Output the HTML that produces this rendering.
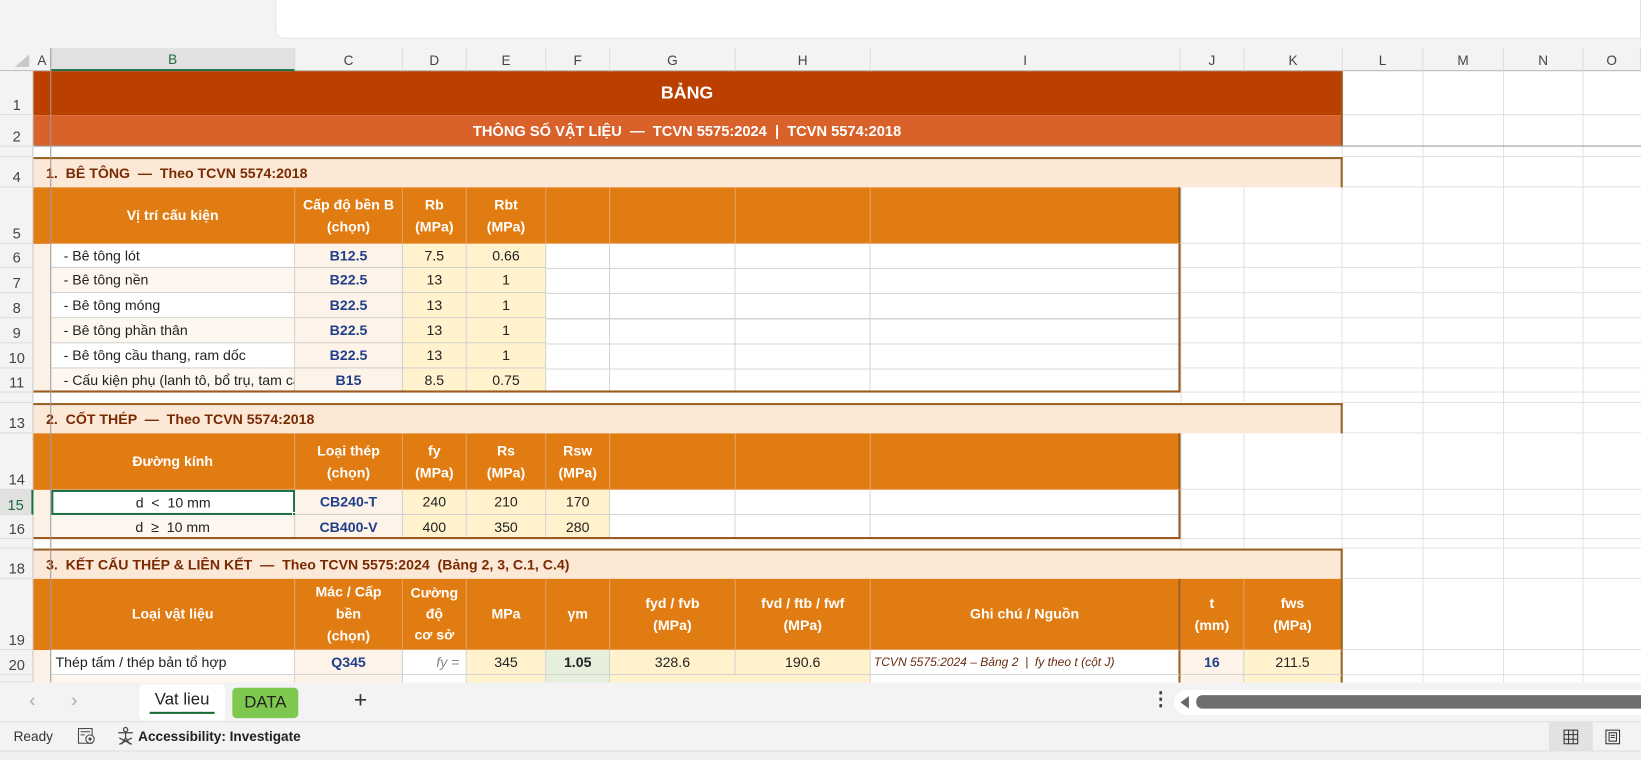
<!DOCTYPE html>
<html><head><meta charset="utf-8"><style>
html,body{margin:0;padding:0;width:1641px;height:760px;overflow:hidden;background:#f0f0f0}
#w{position:absolute;left:0;top:0;width:1568px;height:726px;transform:scale(1.04656,1.0468);transform-origin:0 0;background:#f3f3f3;font-family:"Liberation Sans",sans-serif}
.a{position:absolute;box-sizing:border-box}
.c{position:absolute;box-sizing:border-box;overflow:hidden;white-space:nowrap;display:flex;align-items:center;justify-content:center;font-size:13.5px;color:#222;border-right:1px solid #cfcfcf;border-bottom:1px solid #cfcfcf}
.h{background:#e07c12;color:#fff;font-weight:bold;text-align:center;flex-direction:column;line-height:21px;border-color:#e9a060}
.l{justify-content:flex-start;padding-left:8px}
.b{color:#1f3f8a;font-weight:bold}
.y{background:#fff2cc}
.cr{background:#fdf3e8}
.g{background:#e6efdc}
.sec{background:#fce8d6;color:#7a2a00;font-weight:bold;justify-content:flex-start;padding-left:12px;font-size:13.5px;border:none;border-top:2px solid #9a6428;border-right:2px solid #9a6428}
.rh{position:absolute;left:0;width:32px;box-sizing:border-box;font-size:14px;color:#444;text-align:center;display:flex;align-items:flex-end;justify-content:center;padding-bottom:1px;border-bottom:1px solid #dcdcdc}
.ch{position:absolute;top:46px;height:22px;font-size:13px;color:#444;display:flex;align-items:center;justify-content:center;border-right:1px solid #dcdcdc;box-sizing:border-box}
</style></head><body><div id="w">
<div class="a" style="left:263px;top:0;width:1305px;height:37px;background:#fff;border-bottom-left-radius:8px;border:1px solid #e2e2e2;border-top:none"></div>
<!-- sheet bg -->
<div class="a" style="left:32px;top:68px;width:1536px;height:584px;background:#fff;
background-image:linear-gradient(90deg,transparent 1250px,#e1e1e1 1250px,#e1e1e1 1251px,transparent 1251px,transparent 1327px,#e1e1e1 1327px,#e1e1e1 1328px,transparent 1328px,transparent 1404px,#e1e1e1 1404px,#e1e1e1 1405px,transparent 1405px,transparent 1480px,#e1e1e1 1480px,#e1e1e1 1481px,transparent 1481px)"></div>
<!-- column headers -->
<div class="a" style="left:0;top:46px;width:1568px;height:22px;background:#f3f3f3;border-bottom:1px solid #b8b8b8"></div>
<div class="a" style="left:14px;top:52px;width:0;height:0;border-left:14px solid transparent;border-bottom:12px solid #c8c8c8"></div>
<div class="ch" style="left:32px;width:17px">A</div>
<div class="ch" style="left:49px;width:233px;background:#e1e1e1;color:#1e6b3a;border-bottom:2px solid #1e7145">B</div>
<div class="ch" style="left:282px;width:103px">C</div>
<div class="ch" style="left:385px;width:61px">D</div>
<div class="ch" style="left:446px;width:76px">E</div>
<div class="ch" style="left:522px;width:61px">F</div>
<div class="ch" style="left:583px;width:120px">G</div>
<div class="ch" style="left:703px;width:129px">H</div>
<div class="ch" style="left:832px;width:296px">I</div>
<div class="ch" style="left:1128px;width:61px">J</div>
<div class="ch" style="left:1189px;width:94px">K</div>
<div class="ch" style="left:1283px;width:77px">L</div>
<div class="ch" style="left:1360px;width:77px">M</div>
<div class="ch" style="left:1437px;width:76px">N</div>
<div class="ch" style="left:1513px;width:55px">O</div>
<!-- row headers -->
<div class="a" style="left:0;top:68px;width:32px;height:584px;background:#f3f3f3;border-right:1px solid #c8c8c8"></div>
<div class="rh" style="top:68px;height:42px">1</div><div class="rh" style="top:110px;height:30px">2</div>
<div class="rh" style="top:140px;height:10px"></div><div class="rh" style="top:150px;height:29px">4</div>
<div class="rh" style="top:179px;height:54px">5</div><div class="rh" style="top:233px;height:23px">6</div>
<div class="rh" style="top:256px;height:24px">7</div><div class="rh" style="top:280px;height:24px">8</div>
<div class="rh" style="top:304px;height:24px">9</div><div class="rh" style="top:328px;height:24px">10</div>
<div class="rh" style="top:352px;height:23px">11</div><div class="rh" style="top:375px;height:10px"></div>
<div class="rh" style="top:385px;height:29px">13</div><div class="rh" style="top:414px;height:54px">14</div>
<div class="rh" style="top:468px;height:24px;background:#e1e1e1;color:#1e6b3a;border-right:2px solid #1e7145">15</div><div class="rh" style="top:492px;height:23px">16</div>
<div class="rh" style="top:515px;height:9px"></div><div class="rh" style="top:524px;height:29px">18</div>
<div class="rh" style="top:553px;height:68px">19</div><div class="rh" style="top:621px;height:24px">20</div>
<div class="rh" style="top:645px;height:7px"></div>
<!-- row gridlines for empty area -->
<div class="a" style="left:1283px;top:68px;width:285px;height:584px;background:repeating-linear-gradient(transparent 0 0);">
</div>
<div class="a" style="left:1283px;top:109px;width:285px;height:1px;background:#e1e1e1"></div>
<div class="a" style="left:1283px;top:149px;width:285px;height:1px;background:#e1e1e1"></div>
<div class="a" style="left:1283px;top:178px;width:285px;height:1px;background:#e1e1e1"></div>
<div class="a" style="left:1128px;top:232px;width:440px;height:1px;background:#e1e1e1"></div>
<div class="a" style="left:1128px;top:255px;width:440px;height:1px;background:#e1e1e1"></div>
<div class="a" style="left:1128px;top:279px;width:440px;height:1px;background:#e1e1e1"></div>
<div class="a" style="left:1128px;top:303px;width:440px;height:1px;background:#e1e1e1"></div>
<div class="a" style="left:1128px;top:327px;width:440px;height:1px;background:#e1e1e1"></div>
<div class="a" style="left:1128px;top:351px;width:440px;height:1px;background:#e1e1e1"></div>
<div class="a" style="left:1128px;top:374px;width:440px;height:1px;background:#e1e1e1"></div>
<div class="a" style="left:1283px;top:384px;width:285px;height:1px;background:#e1e1e1"></div>
<div class="a" style="left:1283px;top:413px;width:285px;height:1px;background:#e1e1e1"></div>
<div class="a" style="left:1128px;top:467px;width:440px;height:1px;background:#e1e1e1"></div>
<div class="a" style="left:1128px;top:491px;width:440px;height:1px;background:#e1e1e1"></div>
<div class="a" style="left:32px;top:514px;width:1536px;height:1px;background:#e1e1e1"></div>
<div class="a" style="left:1283px;top:523px;width:285px;height:1px;background:#e1e1e1"></div>
<div class="a" style="left:1283px;top:552px;width:285px;height:1px;background:#e1e1e1"></div>
<div class="a" style="left:1283px;top:620px;width:285px;height:1px;background:#e1e1e1"></div>
<div class="a" style="left:1283px;top:644px;width:285px;height:1px;background:#e1e1e1"></div>
<div class="a" style="left:1188px;top:179px;width:1px;height:205px;background:#e1e1e1"></div>
<div class="a" style="left:1188px;top:414px;width:1px;height:110px;background:#e1e1e1"></div>
<div class="a" style="left:1128px;top:179px;width:1px;height:205px;background:#e1e1e1"></div>
<div class="a" style="left:1128px;top:414px;width:1px;height:110px;background:#e1e1e1"></div>
<!-- title -->
<div class="c" style="left:32px;top:68px;width:1251px;height:42px;background:#bb4000;color:#fff;font-weight:bold;font-size:17px;border:none;border-right:2px solid #9a5a20">BẢNG</div>
<div class="c" style="left:32px;top:110px;width:1251px;height:30px;background:#d9622b;color:#fff;font-weight:bold;font-size:14px;border:none;border-right:2px solid #9a5a20">THÔNG SỐ VẬT LIỆU &nbsp;— &nbsp;TCVN 5575:2024 &nbsp;| &nbsp;TCVN 5574:2018</div>
<!-- section 1 -->
<div class="c sec" style="left:32px;top:150px;width:1251px;height:29px">1.&nbsp; BÊ TÔNG &nbsp;— &nbsp;Theo TCVN 5574:2018</div>
<div class="c h" style="left:32px;top:179px;width:17px;height:54px;border:none"></div>
<div class="c h" style="left:49px;top:179px;width:233px;height:54px">Vị trí cấu kiện</div>
<div class="c h" style="left:282px;top:179px;width:103px;height:54px"><span>Cấp độ bền B</span><span>(chọn)</span></div>
<div class="c h" style="left:385px;top:179px;width:61px;height:54px"><span>Rb</span><span>(MPa)</span></div>
<div class="c h" style="left:446px;top:179px;width:76px;height:54px"><span>Rbt</span><span>(MPa)</span></div>
<div class="c h" style="left:522px;top:179px;width:61px;height:54px"></div>
<div class="c h" style="left:583px;top:179px;width:120px;height:54px"></div>
<div class="c h" style="left:703px;top:179px;width:129px;height:54px"></div>
<div class="c h" style="left:832px;top:179px;width:296px;height:54px;border-right:2px solid #9a5a20"></div>

<div class="c" style="left:32px;top:233px;width:17px;height:142px;background:#fdf1e6;border:none"></div>
<div class="c l" style="left:49px;top:233px;width:233px;height:23px;background:#fff">&nbsp;- Bê tông lót</div>
<div class="c b cr" style="left:282px;top:233px;width:103px;height:23px">B12.5</div>
<div class="c y" style="left:385px;top:233px;width:61px;height:23px">7.5</div>
<div class="c y" style="left:446px;top:233px;width:76px;height:23px">0.66</div>
<div class="c l" style="left:49px;top:256px;width:233px;height:24px;background:#fdf7f0">&nbsp;- Bê tông nền</div>
<div class="c b cr" style="left:282px;top:256px;width:103px;height:24px">B22.5</div>
<div class="c y" style="left:385px;top:256px;width:61px;height:24px">13</div>
<div class="c y" style="left:446px;top:256px;width:76px;height:24px">1</div>
<div class="c l" style="left:49px;top:280px;width:233px;height:24px;background:#fff">&nbsp;- Bê tông móng</div>
<div class="c b cr" style="left:282px;top:280px;width:103px;height:24px">B22.5</div>
<div class="c y" style="left:385px;top:280px;width:61px;height:24px">13</div>
<div class="c y" style="left:446px;top:280px;width:76px;height:24px">1</div>
<div class="c l" style="left:49px;top:304px;width:233px;height:24px;background:#fdf7f0">&nbsp;- Bê tông phần thân</div>
<div class="c b cr" style="left:282px;top:304px;width:103px;height:24px">B22.5</div>
<div class="c y" style="left:385px;top:304px;width:61px;height:24px">13</div>
<div class="c y" style="left:446px;top:304px;width:76px;height:24px">1</div>
<div class="c l" style="left:49px;top:328px;width:233px;height:24px;background:#fff">&nbsp;- Bê tông cầu thang, ram dốc</div>
<div class="c b cr" style="left:282px;top:328px;width:103px;height:24px">B22.5</div>
<div class="c y" style="left:385px;top:328px;width:61px;height:24px">13</div>
<div class="c y" style="left:446px;top:328px;width:76px;height:24px">1</div>
<div class="c l" style="left:49px;top:352px;width:233px;height:23px;background:#fdf7f0">&nbsp;- Cấu kiện phụ (lanh tô, bổ trụ, tam cấp)</div>
<div class="c b cr" style="left:282px;top:352px;width:103px;height:23px">B15</div>
<div class="c y" style="left:385px;top:352px;width:61px;height:23px">8.5</div>
<div class="c y" style="left:446px;top:352px;width:76px;height:23px">0.75</div>
<div class="a" style="left:522px;top:233px;width:606px;height:142px;background:#fff;background-image:linear-gradient(90deg,transparent 60px,#d4d4d4 60px,#d4d4d4 61px,transparent 61px,transparent 180px,#d4d4d4 180px,#d4d4d4 181px,transparent 181px,transparent 309px,#d4d4d4 309px,#d4d4d4 310px,transparent 310px),repeating-linear-gradient(transparent 0 23px,#d4d4d4 23px 24px);border-right:2px solid #9a5a20"></div>
<div class="a" style="left:32px;top:373px;width:1096px;height:2px;background:#9a5a20"></div>
<!-- section 2 -->
<div class="c sec" style="left:32px;top:385px;width:1251px;height:29px">2.&nbsp; CỐT THÉP &nbsp;— &nbsp;Theo TCVN 5574:2018</div>
<div class="c h" style="left:32px;top:414px;width:17px;height:54px;border:none"></div>
<div class="c h" style="left:49px;top:414px;width:233px;height:54px">Đường kính</div>
<div class="c h" style="left:282px;top:414px;width:103px;height:54px"><span>Loại thép</span><span>(chọn)</span></div>
<div class="c h" style="left:385px;top:414px;width:61px;height:54px"><span>fy</span><span>(MPa)</span></div>
<div class="c h" style="left:446px;top:414px;width:76px;height:54px"><span>Rs</span><span>(MPa)</span></div>
<div class="c h" style="left:522px;top:414px;width:61px;height:54px"><span>Rsw</span><span>(MPa)</span></div>
<div class="c h" style="left:583px;top:414px;width:120px;height:54px"></div>
<div class="c h" style="left:703px;top:414px;width:129px;height:54px"></div>
<div class="c h" style="left:832px;top:414px;width:296px;height:54px;border-right:2px solid #9a5a20"></div>
<div class="c" style="left:32px;top:468px;width:17px;height:47px;background:#fdf1e6;border:none"></div>
<div class="c" style="left:49px;top:468px;width:233px;height:24px;background:#fff;border:2px solid #1e7145">d &nbsp;&lt; &nbsp;10 mm</div>
<div class="a" style="left:279px;top:489px;width:5px;height:5px;background:#1e7145;border:1px solid #fff"></div>
<div class="c b cr" style="left:282px;top:468px;width:103px;height:24px">CB240-T</div>
<div class="c y" style="left:385px;top:468px;width:61px;height:24px">240</div>
<div class="c y" style="left:446px;top:468px;width:76px;height:24px">210</div>
<div class="c y" style="left:522px;top:468px;width:61px;height:24px">170</div>
<div class="c" style="left:49px;top:492px;width:233px;height:23px;background:#fdf7f0">d &nbsp;≥ &nbsp;10 mm</div>
<div class="c b cr" style="left:282px;top:492px;width:103px;height:23px">CB400-V</div>
<div class="c y" style="left:385px;top:492px;width:61px;height:23px">400</div>
<div class="c y" style="left:446px;top:492px;width:76px;height:23px">350</div>
<div class="c y" style="left:522px;top:492px;width:61px;height:23px">280</div>
<div class="a" style="left:583px;top:468px;width:545px;height:47px;background:#fff;background-image:linear-gradient(90deg,transparent 119px,#d4d4d4 119px,#d4d4d4 120px,transparent 120px,transparent 248px,#d4d4d4 248px,#d4d4d4 249px,transparent 249px),linear-gradient(transparent 23px,#d4d4d4 23px,#d4d4d4 24px,transparent 24px);border-right:2px solid #9a5a20"></div>
<div class="a" style="left:32px;top:513px;width:1096px;height:2px;background:#9a5a20"></div>
<!-- section 3 -->
<div class="c sec" style="left:32px;top:524px;width:1251px;height:29px">3.&nbsp; KẾT CẤU THÉP &amp; LIÊN KẾT &nbsp;— &nbsp;Theo TCVN 5575:2024 &nbsp;(Bảng 2, 3, C.1, C.4)</div>
<div class="c h" style="left:32px;top:553px;width:17px;height:68px;border:none"></div>
<div class="c h" style="left:49px;top:553px;width:233px;height:68px">Loại vật liệu</div>
<div class="c h" style="left:282px;top:553px;width:103px;height:68px"><span>Mác / Cấp</span><span>bền</span><span>(chọn)</span></div>
<div class="c h" style="left:385px;top:553px;width:61px;height:68px;line-height:20px"><span>Cường</span><span>độ</span><span>cơ sở</span></div>
<div class="c h" style="left:446px;top:553px;width:76px;height:68px">MPa</div>
<div class="c h" style="left:522px;top:553px;width:61px;height:68px">γm</div>
<div class="c h" style="left:583px;top:553px;width:120px;height:68px"><span>fyd / fvb</span><span>(MPa)</span></div>
<div class="c h" style="left:703px;top:553px;width:129px;height:68px"><span>fvd / ftb / fwf</span><span>(MPa)</span></div>
<div class="c h" style="left:832px;top:553px;width:296px;height:68px;border-right:2px solid #9a6428">Ghi chú / Nguồn</div>
<div class="c h" style="left:1128px;top:553px;width:61px;height:68px"><span>t</span><span>(mm)</span></div>
<div class="c h" style="left:1189px;top:553px;width:94px;height:68px;border-right:2px solid #9a6428"><span>fws</span><span>(MPa)</span></div>
<div class="c" style="left:32px;top:621px;width:17px;height:31px;background:#fdf1e6;border:none"></div>
<div class="c l" style="left:49px;top:621px;width:233px;height:24px;background:#fff;padding-left:4px">Thép tấm / thép bản tổ hợp</div>
<div class="c b cr" style="left:282px;top:621px;width:103px;height:24px">Q345</div>
<div class="c" style="left:385px;top:621px;width:61px;height:24px;background:#fff;justify-content:flex-end;padding-right:6px;font-style:italic;color:#888">fy =</div>
<div class="c y" style="left:446px;top:621px;width:76px;height:24px">345</div>
<div class="c g" style="left:522px;top:621px;width:61px;height:24px;font-weight:bold">1.05</div>
<div class="c y" style="left:583px;top:621px;width:120px;height:24px">328.6</div>
<div class="c y" style="left:703px;top:621px;width:129px;height:24px">190.6</div>
<div class="c l" style="left:832px;top:621px;width:296px;height:24px;background:#fff;font-style:italic;font-size:11.5px;color:#6a2a10;padding-left:3px;border-right:2px solid #9a6428">TCVN 5575:2024 – Bảng 2 &nbsp;| &nbsp;fy theo t (cột J)</div>
<div class="c b cr" style="left:1128px;top:621px;width:61px;height:24px">16</div>
<div class="c y" style="left:1189px;top:621px;width:94px;height:24px;border-right:2px solid #9a6428">211.5</div>
<div class="c" style="left:49px;top:645px;width:233px;height:7px;background:#fdf7f0;border-bottom:none"></div>
<div class="c cr" style="left:282px;top:645px;width:103px;height:7px;border-bottom:none"></div>
<div class="c" style="left:385px;top:645px;width:61px;height:7px;background:#fff;border-bottom:none"></div>
<div class="c y" style="left:446px;top:645px;width:76px;height:7px;border-bottom:none"></div>
<div class="c g" style="left:522px;top:645px;width:61px;height:7px;border-bottom:none"></div>
<div class="c y" style="left:583px;top:645px;width:249px;height:7px;border-bottom:none"></div>
<div class="c" style="left:832px;top:645px;width:296px;height:7px;background:#fff;border-right:2px solid #9a6428;border-bottom:none"></div>
<div class="c cr" style="left:1128px;top:645px;width:61px;height:7px;border-bottom:none"></div>
<div class="c y" style="left:1189px;top:645px;width:94px;height:7px;border-right:2px solid #9a6428;border-bottom:none"></div>
<!-- freeze lines -->
<div class="a" style="left:32px;top:139px;width:1536px;height:1px;background:#9a9a9a"></div>
<div class="a" style="left:48px;top:46px;width:1px;height:606px;background:#9a9a9a"></div>
<!-- tab bar -->
<div class="a" style="left:0;top:652px;width:1568px;height:38px;background:#f3f3f3;border-bottom:1px solid #e0e0e0"></div>
<div class="a" style="left:28px;top:659px;font-size:18px;color:#aaa">‹</div>
<div class="a" style="left:68px;top:659px;font-size:18px;color:#aaa">›</div>
<div class="a" style="left:133px;top:654px;width:82px;height:34px;background:#fff;border-radius:4px;font-size:16px;color:#222;text-align:center;line-height:30px">Vat lieu<div class="a" style="left:10px;top:26px;width:62px;height:2px;background:#1e6b3a"></div></div>
<div class="a" style="left:222px;top:657px;width:63px;height:29px;background:#7ec850;border-radius:4px;font-size:16px;color:#222;text-align:center;line-height:29px">DATA</div>
<div class="a" style="left:338px;top:656px;font-size:22px;color:#333">+</div>
<div class="a" style="left:1100px;top:658px;font-size:18px;color:#444;font-weight:bold">⋮</div>
<div class="a" style="left:1122px;top:659px;width:446px;height:24px;background:#fff;border-radius:12px 0 0 12px"></div>
<div class="a" style="left:1128px;top:665px;width:0;height:0;border-top:6px solid transparent;border-bottom:6px solid transparent;border-right:8px solid #666"></div>
<div class="a" style="left:1143px;top:664px;width:425px;height:13px;background:#6e6e6e;border-radius:6px 0 0 6px"></div>
<!-- status bar -->
<div class="a" style="left:0;top:690px;width:1568px;height:28px;background:#f3f3f3;border-bottom:1px solid #dcdcdc"></div>
<div class="a" style="left:13px;top:696px;font-size:13px;color:#333">Ready</div>
<svg class="a" style="left:74px;top:695px" width="18" height="17" viewBox="0 0 18 17"><rect x="1" y="1" width="13" height="14" fill="none" stroke="#444"/><line x1="3" y1="4" x2="12" y2="4" stroke="#444"/><line x1="3" y1="7" x2="7" y2="7" stroke="#444"/><circle cx="12" cy="11" r="4" fill="#f3f3f3" stroke="#444"/><circle cx="12" cy="11" r="1.5" fill="#444"/></svg>
<svg class="a" style="left:111px;top:694px" width="18" height="18" viewBox="0 0 18 18" fill="none" stroke="#444" stroke-width="1.2"><circle cx="9" cy="3" r="2"/><path d="M2 6 L16 6 M9 6 L9 11 L5 17 M9 11 L13 17 M3 11 L15 17 M15 11 L3 17"/></svg>
<div class="a" style="left:132px;top:696px;font-size:13px;color:#222;font-weight:bold">Accessibility: Investigate</div>
<div class="a" style="left:1480px;top:690px;width:42px;height:28px;background:#e2e2e2"></div>
<svg class="a" style="left:1493px;top:696px" width="16" height="16" viewBox="0 0 16 16" fill="none" stroke="#333"><rect x="1.5" y="1.5" width="13" height="13"/><path d="M1.5 5.8H14.5M1.5 10.2H14.5M5.8 1.5V14.5M10.2 1.5V14.5"/></svg>
<svg class="a" style="left:1533px;top:696px" width="16" height="16" viewBox="0 0 16 16" fill="none" stroke="#333"><rect x="1.5" y="1.5" width="13" height="13"/><rect x="4.5" y="4" width="7" height="8"/><path d="M6 6.5H10M6 8.5H10"/></svg>
<div class="a" style="left:0;top:718px;width:1568px;height:8px;background:#f0f0f0"></div>
</div></body></html>
